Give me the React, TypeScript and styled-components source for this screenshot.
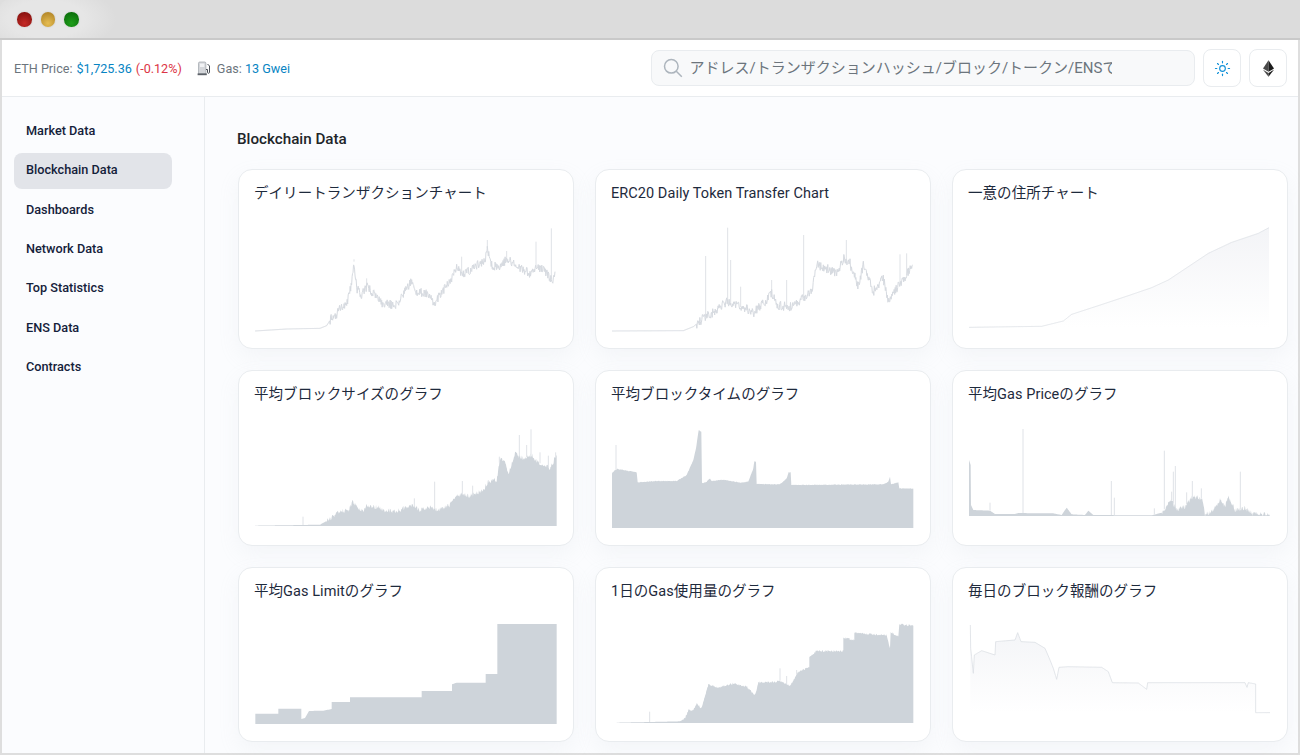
import React from 'react'
import styled, { createGlobalStyle } from 'styled-components'
import { Sun } from 'lucide-react'

const GlobalStyle = createGlobalStyle`
  html, body {
    margin: 0;
    padding: 0;
    height: 755px;
    overflow: hidden;
    background: #fff;
    font-family: Roboto, "Noto Sans CJK JP", sans-serif;
  }
  * { box-sizing: border-box; }
`

const Window = styled.div`
  width: 1300px;
  height: 755px;
  display: flex;
  flex-direction: column;
  background: #dedede;
  padding: 0 2px 2px 2px;
  overflow: hidden;
`

const TitleBar = styled.div`
  height: 40px;
  margin: 0 -2px;
  flex: none;
  display: flex;
  align-items: flex-start;
  gap: 9px;
  padding: 12px 0 0 17px;
  border-top-left-radius: 8px;
  border-bottom: 2px solid #c9c9c9;
  background: radial-gradient(ellipse 70px 34px at 46px 19px, #e6e6e6 55%, #dcdcdc 100%);
`

const Light = styled.span<{ $color: string; $dark: string }>`
  width: 14.500px;
  height: 14.500px;
  border-radius: 50%;
  background: radial-gradient(circle at 50% 75%, ${p => p.$color} 0%, ${p => p.$dark} 80%);
  box-shadow: 0 0 2px rgba(0, 0, 0, 0.15);
`

const Header = styled.header`
  height: 57px;
  flex: none;
  display: flex;
  align-items: center;
  justify-content: space-between;
  padding: 0 11px 0 12px;
  background: #fff;
  border-bottom: 1px solid #e9ecef;
`

const Stats = styled.div`
  display: flex;
  align-items: center;
  font-size: 12.600px;
  color: #6c757d;
`

const Stat = styled.span`
  display: flex;
  align-items: center;
  gap: 4px;
`

const GasStat = styled(Stat)`
  margin-left: 15px;
  gap: 6px;
`

const Blue = styled.span`
  color: #0784c3;
`

const Red = styled.span`
  color: #dc3545;
`

const Tools = styled.div`
  display: flex;
  align-items: center;
  gap: 8px;
`

const SearchBox = styled.label`
  width: 544px;
  height: 36px;
  display: flex;
  align-items: center;
  gap: 6.500px;
  padding-left: 11px;
  border: 1px solid #e9ecef;
  border-radius: 8px;
  background: #f8f9fa;
`

const SearchInput = styled.input`
  width: 422px;
  padding: 0;
  border: 0;
  outline: 0;
  background: transparent;
  font-family: Roboto, "Noto Sans CJK JP", sans-serif;
  font-size: 15px;
  &::placeholder {
    color: #6c757d;
    opacity: 1;
  }
`

const IconButton = styled.button`
  width: 38px;
  height: 38px;
  padding: 0;
  display: flex;
  align-items: center;
  justify-content: center;
  background: #fff;
  border: 1px solid #e9ecef;
  border-radius: 8px;
  color: #1291d8;
`

const Body = styled.div`
  flex: 1;
  min-height: 0;
  display: flex;
  background: #fbfcfe;
`

const Sidebar = styled.nav`
  width: 203px;
  flex: none;
  display: flex;
  flex-direction: column;
  gap: 3.330px;
  padding: 16.500px 32px 0 12px;
  border-right: 1px solid #e9ecef;
`

const NavItem = styled.a<{ $active?: boolean }>`
  height: 36px;
  flex: none;
  display: flex;
  align-items: center;
  padding: 0 0 2px 12px;
  border-radius: 8px;
  font-size: 12.700px;
  font-weight: 500;
  color: #14213a;
  background: ${p => (p.$active ? '#e2e4e9' : 'transparent')};
`

const Main = styled.main`
  flex: 1;
  min-width: 0;
  padding: 33px 0 0 33px;
`

const Heading = styled.h1`
  margin: 0 0 20px -1px;
  font-size: 15.200px;
  line-height: 19px;
  font-weight: 500;
  color: #212529;
`

const Grid = styled.div`
  display: grid;
  grid-template-columns: repeat(3, 336px);
  grid-template-rows: 180px 176px 175px;
  column-gap: 21px;
  row-gap: 21px;
`

const Card = styled.section`
  padding: 14px 16px 0;
  background: #fff;
  border: 1px solid #e9ecef;
  border-radius: 14px;
  box-shadow: 0 8px 20px rgba(189, 197, 209, 0.12);
  overflow: hidden;
`

const CardTitle = styled.h2`
  margin: 0 0 6px -1px;
  font-size: 14.500px;
  line-height: 20px;
  font-weight: 400;
  color: #1e2a3c;
  letter-spacing: 0.060px;
  white-space: nowrap;
`

const ChartSvg = styled.svg`
  display: block;
  width: 304px;
  height: 125px;
`

type Point = [number, number]

type ChartSpec = {
  title: string
  // coordinates are measured at 3x scale from the card's crop
  x0: number
  y0: number
  base: number
  points: Point[]
  kind: 'line' | 'area' | 'fade'
  noise?: number
  noiseFrom?: number
  spikes?: Point[]
}

const rand = (seed: number) => {
  let s = seed
  return () => {
    s = (s * 16807) % 2147483647
    return s / 2147483647 - 0.5
  }
}

const yAt = (points: Point[], x: number) => {
  for (let i = 0; i < points.length - 1; i++) {
    const [ax, ay] = points[i]
    const [bx, by] = points[i + 1]
    if (x >= ax && x <= bx && bx > ax) return ay + ((by - ay) * (x - ax)) / (bx - ax)
  }
  return points[points.length - 1][1]
}

const trace = (spec: ChartSpec) => {
  const r = rand(spec.title.length * 7919 + 13)
  const out: string[] = []
  const { points, noise = 0, noiseFrom = 0 } = spec
  const size = noise ? 1.5 : 3
  for (let i = 0; i < points.length - 1; i++) {
    const [ax, ay] = points[i]
    const [bx, by] = points[i + 1]
    const steps = Math.max(1, Math.round((bx - ax) / size))
    for (let k = 0; k < steps; k++) {
      const t = k / steps
      const x = ax + (bx - ax) * t
      const n = noise && x > noiseFrom ? r() * noise : 0
      out.push(`${x.toFixed(1)},${(ay + (by - ay) * t + n).toFixed(1)}`)
    }
  }
  const last = points[points.length - 1]
  out.push(`${last[0]},${last[1]}`)
  return out.join(' L')
}

const Chart = ({ spec, id }: { spec: ChartSpec; id: string }) => {
  const line = trace(spec)
  const first = spec.points[0][0]
  const last = spec.points[spec.points.length - 1][0]
  const closed = `M${first},${spec.base} L${line} L${last},${spec.base} Z`
  return (
    <ChartSvg viewBox={`${spec.x0} ${spec.y0} 912 375`}>
      <defs>
        <linearGradient id={id} x1="0" y1="0" x2="0" y2="1">
          <stop offset="0" stopColor="#f3f4f7" />
          <stop offset="1" stopColor="#ffffff" />
        </linearGradient>
      </defs>
      {spec.kind === 'area' && <path d={closed} fill="#ced4da" />}
      {spec.kind === 'fade' && <path d={closed} fill={`url(#${id})`} />}
      {spec.spikes?.map(([x, y]) => (
        <line key={x} x1={x} x2={x} y1={y} y2={yAt(spec.points, x)} stroke="#dfe2e7" strokeWidth="3" />
      ))}
      {spec.kind !== 'area' && (
        <path d={`M${line}`} fill="none" stroke={spec.kind === 'fade' ? '#dcdfe5' : '#d6dae0'} strokeWidth={spec.noise ? 3 : 2.4} strokeLinejoin="round" />
      )}
    </ChartSvg>
  )
}

const charts: ChartSpec[] = [
  {
    title: 'デイリートランザクションチャート',
    x0: 75, y0: 135, base: 498, kind: 'line', noise: 26, noiseFrom: 300,
    points: [[75, 498], [170, 492], [270, 490], [290, 482], [305, 458], [320, 450], [330, 430], [350, 420], [362, 370], [372, 290], [380, 370], [395, 390], [410, 365], [430, 385], [455, 415], [500, 420], [520, 385], [545, 350], [560, 380], [590, 385], [615, 415], [640, 375], [665, 345], [680, 305], [700, 330], [740, 300], [765, 285], [772, 250], [785, 300], [810, 310], [830, 280], [860, 305], [900, 325], [920, 305], [940, 315], [970, 350], [975, 320]],
    spikes: [[695, 275], [772, 225], [830, 258], [918, 230], [964, 190], [410, 340], [372, 283]],
  },
  {
    title: 'ERC20 Daily Token Transfer Chart',
    x0: 66, y0: 135, base: 498, kind: 'line', noise: 28, noiseFrom: 320,
    points: [[66, 498], [280, 497], [310, 485], [340, 460], [380, 435], [410, 410], [425, 420], [470, 430], [490, 445], [530, 405], [545, 385], [560, 420], [600, 425], [640, 400], [665, 375], [680, 300], [700, 305], [740, 325], [760, 280], [780, 295], [805, 365], [820, 300], [850, 380], [880, 340], [895, 415], [920, 370], [950, 330], [968, 300]],
    spikes: [[347, 273], [413, 188], [422, 285], [641, 210], [769, 225], [930, 268], [950, 265], [545, 345], [590, 345], [452, 365]],
  },
  {
    title: '一意の住所チャート',
    x0: 72, y0: 135, base: 487, kind: 'fade',
    points: [[72, 487], [290, 484], [355, 468], [380, 448], [460, 422], [550, 392], [620, 368], [670, 345], [790, 265], [860, 232], [940, 205], [972, 188]],
  },
  {
    title: '平均ブロックサイズのグラフ',
    x0: 75, y0: 138, base: 483, kind: 'area', noise: 14, noiseFrom: 290,
    points: [[75, 482], [215, 480], [270, 479], [295, 465], [320, 445], [340, 435], [355, 440], [368, 408], [385, 430], [400, 438], [410, 422], [450, 428], [465, 437], [500, 438], [520, 430], [550, 420], [570, 435], [600, 425], [620, 435], [660, 420], [680, 388], [720, 392], [760, 375], [775, 350], [800, 345], [810, 280], [825, 290], [835, 330], [855, 265], [880, 280], [905, 270], [920, 290], [960, 310], [980, 270]],
    spikes: [[219, 455], [614, 350], [697, 348], [553, 400], [728, 362], [868, 210], [903, 193], [808, 275], [977, 262], [930, 262], [955, 272], [890, 240]],
  },
  {
    title: '平均ブロックタイムのグラフ',
    x0: 66, y0: 138, base: 489, kind: 'area', noise: 2,
    points: [[66, 325], [75, 315], [82, 312], [140, 322], [143, 352], [200, 348], [260, 348], [290, 330], [310, 285], [318, 250], [326, 195], [334, 200], [336, 355], [350, 350], [360, 340], [365, 348], [400, 344], [450, 353], [475, 350], [490, 310], [493, 288], [498, 290], [500, 357], [570, 358], [590, 340], [596, 322], [602, 322], [604, 360], [880, 358], [895, 350], [900, 335], [903, 358], [925, 352], [928, 370], [970, 371]],
    spikes: [[78, 240]],
  },
  {
    title: '平均Gas Priceのグラフ',
    x0: 72, y0: 138, base: 453, kind: 'area', noise: 14, noiseFrom: 650,
    points: [[72, 285], [77, 300], [78, 420], [85, 435], [135, 437], [150, 447], [210, 447], [220, 444], [290, 445], [325, 445], [350, 450], [365, 428], [380, 448], [420, 450], [430, 437], [445, 450], [620, 451], [650, 443], [680, 405], [695, 435], [720, 425], [740, 395], [770, 400], [780, 448], [800, 440], [825, 405], [840, 425], [850, 395], [870, 435], [900, 430], [925, 447], [975, 447]],
    spikes: [[234, 192], [499, 348], [508, 398], [658, 257], [685, 320], [691, 303], [742, 348], [769, 370], [886, 320], [135, 413], [628, 430], [680, 380], [725, 382]],
  },
  {
    title: '平均Gas Limitのグラフ',
    x0: 75, y0: 144, base: 492, kind: 'area',
    points: [[76, 461], [145, 461], [145, 446], [214, 446], [214, 477], [225, 474], [237, 453], [280, 452], [305, 447], [305, 426], [360, 426], [360, 412], [575, 412], [575, 393], [666, 393], [666, 373], [680, 368], [767, 368], [767, 342], [802, 342], [802, 192], [980, 192]],
  },
  {
    title: '1日のGas使用量のグラフ',
    x0: 66, y0: 144, base: 489, kind: 'area', noise: 6, noiseFrom: 280,
    points: [[80, 488], [180, 486], [270, 484], [285, 475], [295, 450], [310, 452], [320, 430], [335, 445], [355, 373], [385, 383], [395, 380], [430, 370], [470, 380], [495, 405], [505, 368], [560, 365], [570, 362], [600, 378], [625, 335], [658, 322], [658, 290], [680, 273], [760, 273], [760, 233], [793, 240], [793, 218], [830, 222], [890, 225], [900, 265], [902, 218], [925, 228], [928, 193], [970, 197]],
    spikes: [[179, 455], [570, 325], [590, 348], [620, 330]],
  },
  {
    title: '毎日のブロック報酬のグラフ',
    x0: 72, y0: 144, base: 458, kind: 'fade',
    points: [[76, 195], [77, 265], [85, 340], [88, 285], [110, 272], [150, 285], [152, 245], [210, 240], [218, 218], [228, 245], [270, 247], [300, 265], [315, 300], [325, 325], [335, 358], [342, 322], [370, 320], [470, 322], [490, 335], [502, 368], [580, 369], [605, 388], [608, 368], [900, 368], [906, 382], [910, 368], [932, 372], [932, 458], [975, 458]],
  },
]

const navItems = ['Market Data', 'Blockchain Data', 'Dashboards', 'Network Data', 'Top Statistics', 'ENS Data', 'Contracts']

const GasIcon = () => (
  <svg width="14" height="15" viewBox="0 0 14 15">
    <path d="M1.5 2.2C1.5 1.5 2 1 2.7 1h5c.7 0 1.2.5 1.2 1.2V13h-7.400z" fill="#d4d6da" stroke="#9ea3aa" strokeWidth=".7" />
    <rect x="3" y="2.600" width="4.300" height="3.400" fill="#f1f2f4" />
    <rect x=".6" y="12.400" width="9.200" height="1.800" fill="#5d6269" />
    <path d="M10.500 3l2 2v6.300c0 1.300-2 1.300-2 0V8.500H9" fill="none" stroke="#4a4f56" strokeWidth="1" />
  </svg>
)

const EthIcon = () => (
  <svg width="11" height="17" viewBox="0 0 12 18">
    <path d="M6 0L0 9.100l6 3.500z" fill="#4a4a4a" />
    <path d="M6 0l6 9.100-6 3.500z" fill="#1c1c1c" />
    <path d="M0 10.400L6 18v-4.200z" fill="#4a4a4a" />
    <path d="M12 10.400L6 18v-4.200z" fill="#1c1c1c" />
  </svg>
)

const SearchIcon = () => (
  <svg width="20" height="20" viewBox="0 0 20 20" fill="none" stroke="#adb5bd" strokeWidth="1.500">
    <circle cx="8.300" cy="8.300" r="6.800" />
    <path d="M13.300 13.300l5.500 5.500" />
  </svg>
)

const App = () => (
  <Window>
    <GlobalStyle />
    <TitleBar>
      <Light $color="#c42a26" $dark="#8a1310" />
      <Light $color="#e6bd52" $dark="#b5892a" />
      <Light $color="#1f9e1a" $dark="#0c700c" />
    </TitleBar>
    <Header>
      <Stats>
        <Stat>
          ETH Price: <Blue>$1,725.36</Blue> <Red>(-0.12%)</Red>
        </Stat>
        <GasStat>
          <GasIcon />
          <span>
            Gas: <Blue>13 Gwei</Blue>
          </span>
        </GasStat>
      </Stats>
      <Tools>
        <SearchBox>
          <SearchIcon />
          <SearchInput placeholder="アドレス/トランザクションハッシュ/ブロック/トークン/ENSで検索" />
        </SearchBox>
        <IconButton>
          <Sun size={17} strokeWidth={1.6} />
        </IconButton>
        <IconButton>
          <EthIcon />
        </IconButton>
      </Tools>
    </Header>
    <Body>
      <Sidebar>
        {navItems.map(item => (
          <NavItem key={item} $active={item === 'Blockchain Data'}>
            {item}
          </NavItem>
        ))}
      </Sidebar>
      <Main>
        <Heading>Blockchain Data</Heading>
        <Grid>
          {charts.map((spec, i) => (
            <Card key={spec.title}>
              <CardTitle>{spec.title}</CardTitle>
              <Chart spec={spec} id={`fade-${i}`} />
            </Card>
          ))}
        </Grid>
      </Main>
    </Body>
  </Window>
)

export default App
